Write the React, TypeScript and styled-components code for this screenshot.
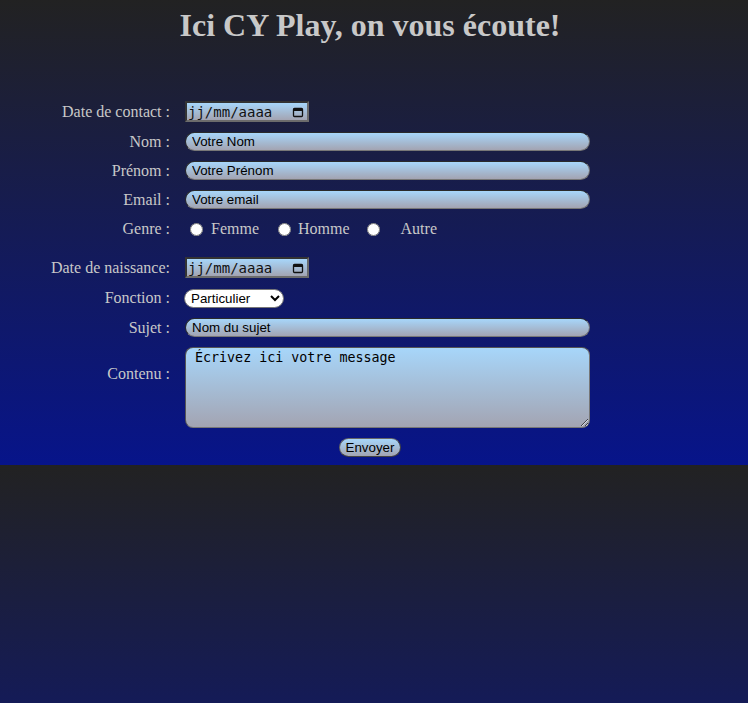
import React from 'react';
import styled, { createGlobalStyle } from 'styled-components';

const GlobalStyle = createGlobalStyle`
  html {
    background: linear-gradient(#222222, #07148a);
    background-size: 100% 465px;
    background-repeat: repeat-y;
  }
  body {
    margin: 0;
    font-family: 'Liberation Serif', serif;
  }
`;

const fieldGradient = 'linear-gradient(#a7d6fa, #a3a4b2)';

const Page = styled.div`
  width: 740px;
  padding-top: 7px;
`;

const Title = styled.h1`
  margin: 0;
  text-align: center;
  font-family: 'Liberation Serif', serif;
  font-size: 32px;
  font-weight: bold;
  color: #c8c8c8;
`;

const FormGrid = styled.form`
  margin-top: 57px;
  display: grid;
  grid-template-columns: 170px 405px;
  column-gap: 15px;
  row-gap: 10px;
  align-items: center;
`;

const Label = styled.label<{ $top?: number }>`
  text-align: right;
  font-size: 16px;
  color: #c8c8c8;
  white-space: nowrap;
  align-self: ${(p) => (p.$top !== undefined ? 'start' : 'center')};
  padding-top: ${(p) => p.$top ?? 0}px;
`;

const DateBox = styled.div`
  width: 124px;
  height: 21px;
  box-sizing: border-box;
  display: flex;
  align-items: center;
  justify-content: space-between;
  padding: 0 3px 0 1px;
  border: 2px solid;
  border-color: #333 #6c6c6c #6c6c6c #333;
  background: ${fieldGradient};
  font-family: 'DejaVu Sans Mono', monospace;
  font-size: 14px;
  color: #111;
`;

const TextInput = styled.input`
  width: 405px;
  height: 19px;
  box-sizing: border-box;
  padding: 0 6px;
  border: 1px solid;
  border-color: #2a2a2a #777 #777 #2a2a2a;
  border-radius: 10px;
  background: ${fieldGradient};
  font-family: 'Liberation Sans', Arial, sans-serif;
  font-size: 13.33px;
  color: #000;
  outline: none;
  &::placeholder {
    color: #000;
  }
`;

const RadioGroup = styled.div`
  display: flex;
  align-items: center;
  height: 20px;
  margin-bottom: 8px;
  font-size: 16px;
  color: #c8c8c8;
`;

const Radio = styled.input.attrs({ type: 'radio' })`
  width: 13px;
  height: 13px;
  margin: 0 0 0 5px;
`;

const RadioText = styled.span<{ $before: number; $after: number }>`
  margin-left: ${(p) => p.$before}px;
  margin-right: ${(p) => p.$after}px;
`;

const SelectWrap = styled.div`
  padding-top: 1px;
`;

const Select = styled.select`
  width: 100px;
  height: 19px;
  margin-left: -1px;
  box-sizing: border-box;
  border: 1px solid #777;
  border-radius: 10px;
  background: #fff;
  font-family: 'Liberation Sans', Arial, sans-serif;
  font-size: 13.33px;
  color: #000;
  padding: 0 2px;
  display: block;
`;

const TextArea = styled.textarea`
  width: 405px;
  height: 81px;
  box-sizing: border-box;
  padding: 2px 9px;
  border: 1px solid;
  border-color: #555 #777 #777 #555;
  border-radius: 8px;
  background: ${fieldGradient};
  font-family: 'DejaVu Sans Mono', monospace;
  font-size: 13.33px;
  color: #000;
  outline: none;
  &::placeholder {
    color: #000;
  }
`;

const Actions = styled.div`
  display: flex;
  justify-content: center;
  margin-top: 10px;
  padding-bottom: 8px;
`;

const SubmitButton = styled.button`
  width: 62px;
  height: 19px;
  box-sizing: border-box;
  padding: 0;
  border: 1px solid;
  border-color: #666 #444 #444 #666;
  border-radius: 10px;
  background: ${fieldGradient};
  font-family: 'Liberation Sans', Arial, sans-serif;
  font-size: 13.33px;
  color: #000;
`;

const CalendarIcon = () => (
  <svg width="12" height="12" viewBox="0 0 12 12">
    <rect x="1.5" y="2.5" width="9" height="8" rx="1" fill="none" stroke="#111" strokeWidth="1.3" />
    <rect x="1.5" y="2.5" width="9" height="2.5" fill="#111" />
  </svg>
);

const DateField = () => (
  <DateBox>
    <span>jj/mm/aaaa</span>
    <CalendarIcon />
  </DateBox>
);

export default function App() {
  return (
    <Page>
      <GlobalStyle />
      <Title>Ici CY Play, on vous écoute!</Title>
      <FormGrid onSubmit={(e) => e.preventDefault()}>
        <Label>Date de contact :</Label>
        <DateField />

        <Label>Nom :</Label>
        <TextInput placeholder="Votre Nom" />

        <Label>Prénom :</Label>
        <TextInput placeholder="Votre Prénom" />

        <Label>Email :</Label>
        <TextInput placeholder="Votre email" />

        <Label style={{ marginBottom: 8 }}>Genre :</Label>
        <RadioGroup>
          <Radio name="genre" />
          <RadioText $before={8} $after={14}>Femme</RadioText>
          <Radio name="genre" />
          <RadioText $before={7} $after={12}>Homme</RadioText>
          <Radio name="genre" />
          <RadioText $before={21} $after={0}>Autre</RadioText>
        </RadioGroup>

        <Label>Date de naissance:</Label>
        <DateField />

        <Label>Fonction :</Label>
        <SelectWrap>
          <Select defaultValue="particulier">
            <option value="particulier">Particulier</option>
            <option value="professionnel">Professionnel</option>
          </Select>
        </SelectWrap>

        <Label>Sujet :</Label>
        <TextInput placeholder="Nom du sujet" />

        <Label $top={18}>Contenu :</Label>
        <TextArea placeholder="Écrivez ici votre message" />
      </FormGrid>
      <Actions>
        <SubmitButton type="button">Envoyer</SubmitButton>
      </Actions>
    </Page>
  );
}
